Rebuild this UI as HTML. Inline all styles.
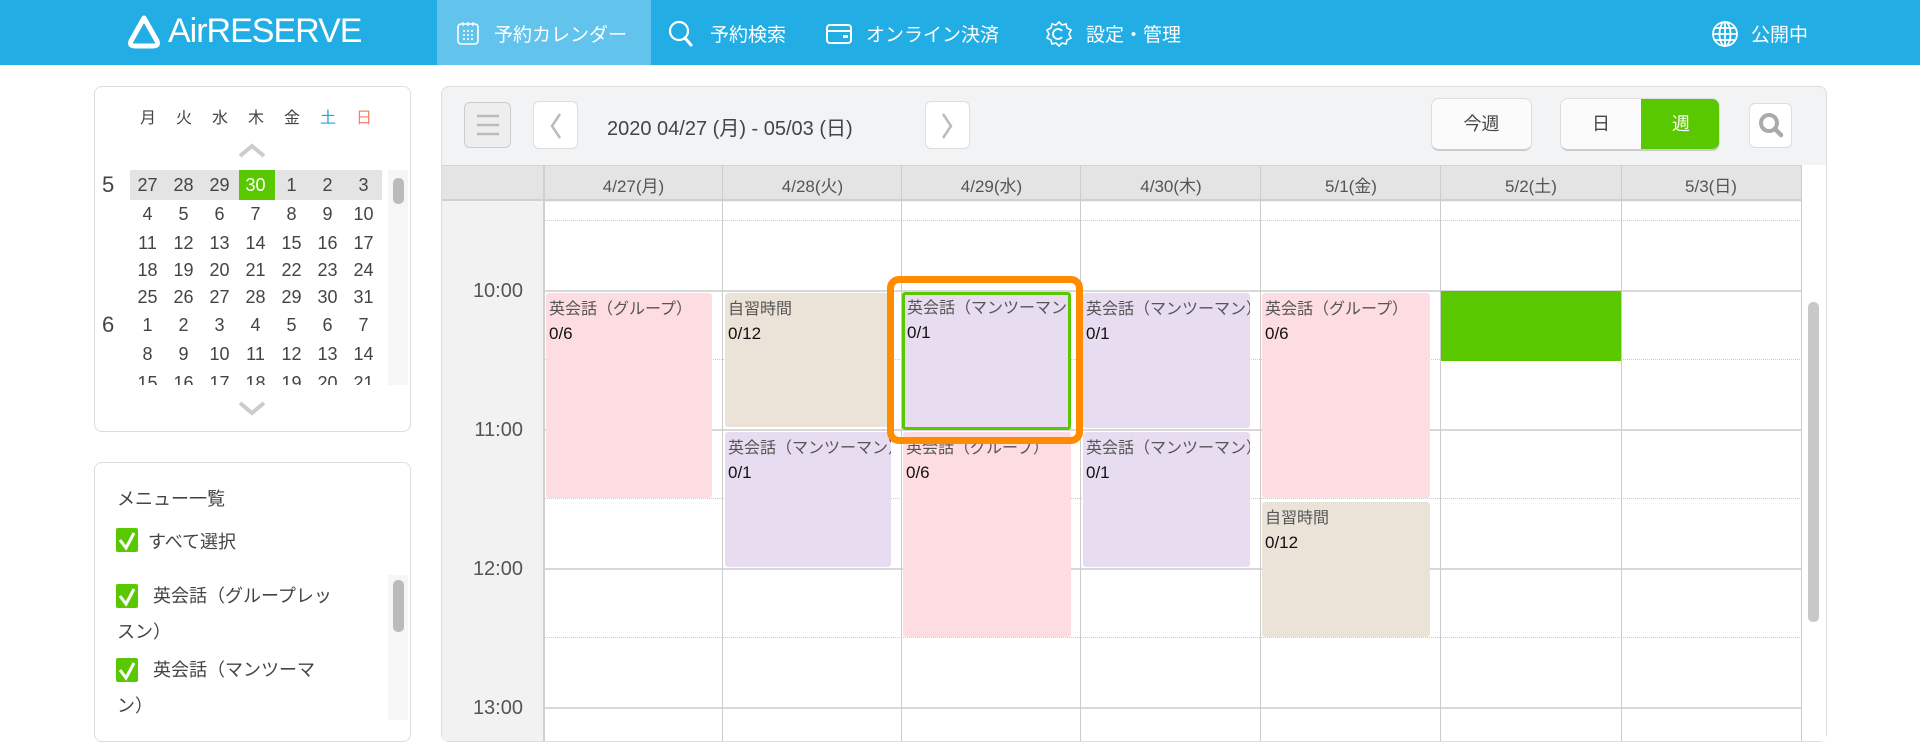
<!DOCTYPE html>
<html><head><meta charset="utf-8"><style>
*{box-sizing:border-box;margin:0;padding:0}
body{width:1920px;height:750px;overflow:hidden;background:#fff;font-family:"Liberation Sans","Noto Sans CJK JP",sans-serif;color:#444;position:relative}
.abs{position:absolute}
.hdr{left:0;top:0;width:1920px;height:65px;background:#22aee4}
.nav{color:#fff;font-size:19px;top:20px;white-space:nowrap}
.card{border:1px solid #ddd;border-radius:8px;background:#fff}
.wd{top:104px;font-size:16px;width:36px;text-align:center}
.cd{font-size:18px;width:35px;text-align:center;height:29px;line-height:29px}
.ev{border-radius:3px;padding:6px 3px;overflow:hidden;white-space:nowrap}
.ev .t{font-size:16px;color:#555;line-height:21px}
.ev .c{font-size:17px;color:#111;line-height:28px}
.pink{background:#fddde1}.beige{background:#ece3d8}.lav{background:#e8ddf0}
.chk{width:22px;height:24px;background:#5ac800;border-radius:2px}
.time{font-size:20px;color:#555;left:441px;width:82px;text-align:right}
</style></head><body>
<div class="abs hdr"></div>
<svg class="abs" style="left:126px;top:14px" width="36" height="36" viewBox="0 0 36 36"><path d="M18 4 L5 27 Q3 32 9 32 L27 32 Q33 32 31 27 Z" fill="none" stroke="#fff" stroke-width="5" stroke-linejoin="round"/></svg>
<div class="abs" style="left:168px;top:12px;color:#fff;font-size:34px;letter-spacing:-1px">AirRESERVE</div>
<div class="abs" style="left:437px;top:0;width:214px;height:65px;background:#62c4ec"></div>
<svg class="abs" style="left:455px;top:20px" width="26" height="26" viewBox="0 0 26 26"><rect x="3" y="4" width="20" height="20" rx="3" fill="none" stroke="#fff" stroke-width="1.6"/><g fill="#fff"><circle cx="9" cy="11" r="1"/><circle cx="13" cy="11" r="1"/><circle cx="17" cy="11" r="1"/><circle cx="9" cy="15" r="1"/><circle cx="13" cy="15" r="1"/><circle cx="17" cy="15" r="1"/><circle cx="9" cy="19" r="1"/><circle cx="13" cy="19" r="1"/><circle cx="17" cy="19" r="1"/></g><path d="M8 2v4M13 2v4M18 2v4" stroke="#fff" stroke-width="1.4"/></svg>
<div class="abs nav" style="left:494px">予約カレンダー</div>
<svg class="abs" style="left:667px;top:19px" width="30" height="30" viewBox="0 0 30 30"><circle cx="12" cy="12" r="9" fill="none" stroke="#fff" stroke-width="2.2"/><path d="M18 19l6 7" stroke="#fff" stroke-width="3" stroke-linecap="round"/></svg>
<div class="abs nav" style="left:710px">予約検索</div>
<svg class="abs" style="left:825px;top:21px" width="28" height="26" viewBox="0 0 28 26"><rect x="2" y="4" width="24" height="18" rx="3" fill="none" stroke="#fff" stroke-width="2"/><path d="M2 10h24" stroke="#fff" stroke-width="2"/><rect x="18" y="14" width="5" height="3" fill="#fff"/></svg>
<div class="abs nav" style="left:866px">オンライン決済</div>
<svg class="abs" style="left:1044px;top:19px" width="30" height="30" viewBox="0 0 30 30"><path d="M15 3l3 3 4-1 1 4 4 2-2 4 2 4-4 2-1 4-4-1-3 3-3-3-4 1-1-4-4-2 2-4-2-4 4-2 1-4 4 1z" fill="none" stroke="#fff" stroke-width="1.6"/><path d="M18 12a5 5 0 1 0 0 6" fill="none" stroke="#fff" stroke-width="1.8"/></svg>
<div class="abs nav" style="left:1086px">設定・管理</div>
<svg class="abs" style="left:1711px;top:20px" width="28" height="28" viewBox="0 0 28 28"><g fill="none" stroke="#fff" stroke-width="1.8"><circle cx="14" cy="14" r="12"/><ellipse cx="14" cy="14" rx="5.5" ry="12"/><path d="M14 2v24M2 14h24M4 8h20M4 20h20"/></g></svg>
<div class="abs nav" style="left:1751px">公開中</div>

<div class="abs card" style="left:94px;top:86px;width:317px;height:346px"></div>
<div class="abs wd" style="left:130px">月</div><div class="abs wd" style="left:166px">火</div><div class="abs wd" style="left:202px">水</div><div class="abs wd" style="left:238px">木</div><div class="abs wd" style="left:274px">金</div><div class="abs wd" style="left:310px;color:#1ea5e0">土</div><div class="abs wd" style="left:346px;color:#f4836e">日</div>
<svg class="abs" style="left:237px;top:142px" width="30" height="16" viewBox="0 0 30 16"><path d="M3 14L15 4l12 10" fill="none" stroke="#ccc" stroke-width="4"/></svg>
<div class="abs" style="left:130px;top:170px;width:252px;height:30px;background:#e4e4e4"></div>
<div class="abs" style="left:239px;top:170px;width:36px;height:30px;background:#5ac800"></div>
<div class="abs" style="left:388px;top:170px;width:20px;height:215px;background:#f6f6f6"></div>
<div class="abs" style="left:393px;top:178px;width:11px;height:26px;background:#bbb;border-radius:5px"></div>
<div class="abs" style="left:94px;top:170px;width:296px;height:215px;overflow:hidden">
<div class="abs" style="left:8px;top:0;font-size:22px;line-height:30px">5</div>
<div class="abs" style="left:8px;top:140px;font-size:22px;line-height:30px">6</div>
<div style="position:absolute;left:36px;top:1px;width:252px;display:grid;grid-template-columns:repeat(7,36px);grid-template-rows:29px 29px 27px 27px 28px 29px 29px 29px">
<div class="cd">27</div><div class="cd">28</div><div class="cd">29</div><div class="cd" style="color:#fff">30</div><div class="cd">1</div><div class="cd">2</div><div class="cd">3</div>
<div class="cd">4</div><div class="cd">5</div><div class="cd">6</div><div class="cd">7</div><div class="cd">8</div><div class="cd">9</div><div class="cd">10</div>
<div class="cd">11</div><div class="cd">12</div><div class="cd">13</div><div class="cd">14</div><div class="cd">15</div><div class="cd">16</div><div class="cd">17</div>
<div class="cd">18</div><div class="cd">19</div><div class="cd">20</div><div class="cd">21</div><div class="cd">22</div><div class="cd">23</div><div class="cd">24</div>
<div class="cd">25</div><div class="cd">26</div><div class="cd">27</div><div class="cd">28</div><div class="cd">29</div><div class="cd">30</div><div class="cd">31</div>
<div class="cd">1</div><div class="cd">2</div><div class="cd">3</div><div class="cd">4</div><div class="cd">5</div><div class="cd">6</div><div class="cd">7</div>
<div class="cd">8</div><div class="cd">9</div><div class="cd">10</div><div class="cd">11</div><div class="cd">12</div><div class="cd">13</div><div class="cd">14</div>
<div class="cd">15</div><div class="cd">16</div><div class="cd">17</div><div class="cd">18</div><div class="cd">19</div><div class="cd">20</div><div class="cd">21</div>
</div></div>
<svg class="abs" style="left:237px;top:400px" width="30" height="16" viewBox="0 0 30 16"><path d="M3 3l12 10L27 3" fill="none" stroke="#ccc" stroke-width="4"/></svg>

<div class="abs card" style="left:94px;top:462px;width:317px;height:280px"></div>
<div class="abs" style="left:117px;top:485px;font-size:18px;color:#444">メニュー一覧</div>
<div class="abs chk" style="left:116px;top:528px"></div><svg class="abs" style="left:116px;top:528px" width="22" height="24"><path d="M4 12l6 8 8-15" fill="none" stroke="#fff" stroke-width="3"/></svg>
<div class="abs" style="left:148px;top:528px;font-size:18px">すべて選択</div>
<div class="abs" style="left:388px;top:575px;width:20px;height:145px;background:#f6f6f6"></div>
<div class="abs" style="left:393px;top:580px;width:11px;height:52px;background:#bbb;border-radius:5px"></div>
<div class="abs chk" style="left:116px;top:584px"></div><svg class="abs" style="left:116px;top:584px" width="22" height="24"><path d="M4 12l6 8 8-15" fill="none" stroke="#fff" stroke-width="3"/></svg>
<div class="abs" style="left:117px;top:578px;font-size:18px;line-height:36px;width:226px;text-indent:36px">英会話（グループレッスン）</div>
<div class="abs chk" style="left:116px;top:658px"></div><svg class="abs" style="left:116px;top:658px" width="22" height="24"><path d="M4 12l6 8 8-15" fill="none" stroke="#fff" stroke-width="3"/></svg>
<div class="abs" style="left:117px;top:652px;font-size:18px;line-height:36px;width:210px;text-indent:36px">英会話（マンツーマン）</div>

<div class="abs" style="left:441px;top:86px;width:1386px;height:656px;border:1px solid #ddd;border-radius:8px;background:#f2f3f5;overflow:hidden"></div>
<div class="abs" style="left:464px;top:102px;width:47px;height:46px;border:1px solid #ccc;border-radius:6px;background:#eee"></div>
<svg class="abs" style="left:475px;top:113px" width="26" height="24"><path d="M2 3h22M2 12h22M2 21h22" stroke="#bbb" stroke-width="2.5"/></svg>
<div class="abs" style="left:533px;top:101px;width:45px;height:48px;border:1px solid #ddd;border-radius:6px;background:#fff"></div>
<svg class="abs" style="left:546px;top:111px" width="20" height="30"><path d="M14 3L6 15l8 12" fill="none" stroke="#bbb" stroke-width="2.5"/></svg>
<div class="abs" style="left:607px;top:112px;font-size:20px;color:#444">2020 04/27 (月) - 05/03 (日)</div>
<div class="abs" style="left:925px;top:101px;width:45px;height:48px;border:1px solid #ddd;border-radius:6px;background:#fff"></div>
<svg class="abs" style="left:937px;top:111px" width="20" height="30"><path d="M6 3l8 12-8 12" fill="none" stroke="#bbb" stroke-width="2.5"/></svg>
<div class="abs" style="left:1431px;top:98px;width:101px;height:53px;border:1px solid #ddd;border-bottom:2px solid #ccc;border-radius:8px;background:#fbfbfb;font-size:18px;text-align:center;line-height:50px">今週</div>
<div class="abs" style="left:1560px;top:98px;width:160px;height:53px;border:1px solid #ddd;border-bottom:2px solid #ccc;border-radius:8px;background:#fbfbfb;overflow:hidden">
<div class="abs" style="left:0;top:0;width:80px;height:51px;font-size:18px;text-align:center;line-height:50px">日</div>
<div class="abs" style="left:80px;top:0;width:80px;height:51px;background:#5ac800;color:#fff;font-size:18px;text-align:center;line-height:50px">週</div></div>
<div class="abs" style="left:1749px;top:103px;width:43px;height:45px;border:1px solid #ddd;border-radius:6px;background:#fff"></div>
<svg class="abs" style="left:1756px;top:110px" width="30" height="30"><circle cx="13" cy="13" r="8" fill="none" stroke="#aaa" stroke-width="4"/><path d="M19 19l6 6" stroke="#aaa" stroke-width="4.5" stroke-linecap="round"/></svg>

<div class="abs" style="left:442px;top:165px;width:1360px;height:36px;background:#e4e4e4;border-top:1px solid #d4d4d4;border-bottom:2px solid #d0d0d0"></div>
<div class="abs" style="left:442px;top:202px;width:102px;height:539px;background:#f2f2f2"></div>
<div class="abs" style="left:544px;top:202px;width:1258px;height:539px;background:#fff"></div>
<div class="abs" style="left:1802px;top:165px;width:24px;height:576px;background:#fff"></div>
<div class="abs" style="left:1808px;top:302px;width:11px;height:320px;background:#c8c8c8;border-radius:5px"></div>
<div class="abs" style="left:544px;top:172px;width:1260px;display:flex;font-size:17px;color:#555">
<div style="width:179px;text-align:center">4/27(月)</div><div style="width:179px;text-align:center">4/28(火)</div><div style="width:179px;text-align:center">4/29(水)</div><div style="width:180px;text-align:center">4/30(木)</div><div style="width:180px;text-align:center">5/1(金)</div><div style="width:180px;text-align:center">5/2(土)</div><div style="width:180px;text-align:center">5/3(日)</div></div>
<div class="abs" style="left:544px;top:220px;width:1258px;border-top:1px dotted #ccc"></div>
<div class="abs" style="left:544px;top:290px;width:1258px;border-top:2px solid #d8d8d8"></div>
<div class="abs" style="left:544px;top:359px;width:1258px;border-top:1px dotted #ccc"></div>
<div class="abs" style="left:544px;top:429px;width:1258px;border-top:2px solid #d8d8d8"></div>
<div class="abs" style="left:544px;top:498px;width:1258px;border-top:1px dotted #ccc"></div>
<div class="abs" style="left:544px;top:568px;width:1258px;border-top:2px solid #d8d8d8"></div>
<div class="abs" style="left:544px;top:637px;width:1258px;border-top:1px dotted #ccc"></div>
<div class="abs" style="left:544px;top:707px;width:1258px;border-top:2px solid #d8d8d8"></div>
<div class="abs" style="left:543px;top:165px;height:576px;border-left:2px solid #d0d0d0"></div>
<div class="abs" style="left:722px;top:165px;height:576px;border-left:1px solid #ccc"></div>
<div class="abs" style="left:901px;top:165px;height:576px;border-left:1px solid #ccc"></div>
<div class="abs" style="left:1080px;top:165px;height:576px;border-left:1px solid #ccc"></div>
<div class="abs" style="left:1260px;top:165px;height:576px;border-left:1px solid #ccc"></div>
<div class="abs" style="left:1440px;top:165px;height:576px;border-left:1px solid #ccc"></div>
<div class="abs" style="left:1621px;top:165px;height:576px;border-left:1px solid #ccc"></div>
<div class="abs" style="left:1801px;top:165px;height:576px;border-left:1px solid #ccc"></div>
<div class="abs time" style="top:280px">10:00</div>
<div class="abs time" style="top:419px">11:00</div>
<div class="abs time" style="top:558px">12:00</div>
<div class="abs time" style="top:697px">13:00</div>
<div class="abs ev pink" style="left:546px;top:293px;width:166px;height:205px"><div class="t">英会話（グループ）</div><div class="c">0/6</div></div>
<div class="abs ev beige" style="left:725px;top:293px;width:166px;height:134px"><div class="t">自習時間</div><div class="c">0/12</div></div>
<div class="abs ev lav" style="left:725px;top:432px;width:166px;height:135px"><div class="t">英会話（マンツーマン）</div><div class="c">0/1</div></div>
<div class="abs ev pink" style="left:903px;top:432px;width:168px;height:205px"><div class="t">英会話（グループ）</div><div class="c">0/6</div></div>
<div class="abs ev lav" style="left:902px;top:292px;width:169px;height:138px;border:3px solid #5ac800;padding:3px 2px"><div class="t">英会話（マンツーマン）</div><div class="c">0/1</div></div>
<div class="abs ev lav" style="left:1083px;top:293px;width:167px;height:135px"><div class="t">英会話（マンツーマン）</div><div class="c">0/1</div></div>
<div class="abs ev lav" style="left:1083px;top:432px;width:167px;height:135px"><div class="t">英会話（マンツーマン）</div><div class="c">0/1</div></div>
<div class="abs ev pink" style="left:1262px;top:293px;width:168px;height:205px"><div class="t">英会話（グループ）</div><div class="c">0/6</div></div>
<div class="abs ev beige" style="left:1262px;top:502px;width:168px;height:135px"><div class="t">自習時間</div><div class="c">0/12</div></div>
<div class="abs" style="left:1441px;top:291px;width:180px;height:70px;background:#5ac800"></div>
<div class="abs" style="left:887px;top:276px;width:196px;height:168px;border:7px solid #ff8c00;border-radius:12px"></div>
</body></html>
